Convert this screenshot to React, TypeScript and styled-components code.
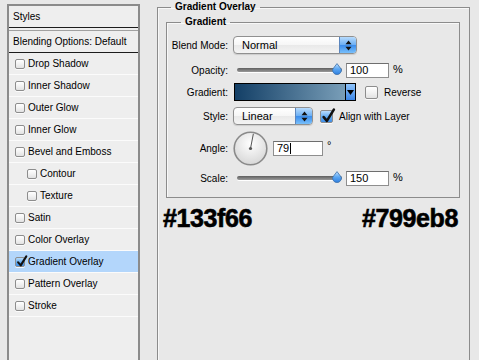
import { FC } from "react";
import styled, { createGlobalStyle } from "styled-components";

const GlobalStyle = createGlobalStyle`
  html, body {
    margin: 0;
    padding: 0;
    background: #e8e8e8;
  }
  body {
    font-family: "Liberation Sans", Arial, sans-serif;
    font-size: 10px;
    color: #000;
    overflow: hidden;
  }
`;

const Page = styled.div`
  display: flex;
  align-items: flex-start;
  width: 479px;
  height: 360px;
  overflow: hidden;
`;

/* ---------- left list ---------- */

const StylesPanel = styled.aside`
  flex: none;
  box-sizing: border-box;
  width: 133px;
  height: 400px;
  margin: 4px 0 0 7px;
  border: 2px solid #8b8b8b;
  background: #eeeeee;
`;

const PanelHeader = styled.div`
  height: 21px;
  display: flex;
  align-items: center;
  padding-left: 4px;
  border-bottom: 1px solid #1c1c1c;
  margin-bottom: 2px;
`;

const BlendingRow = styled.div`
  height: 21px;
  display: flex;
  align-items: center;
  padding-left: 4px;
  border-top: 1px solid #a0a0a0;
  border-bottom: 1px solid #1c1c1c;
`;

const EffectRow = styled.div<{ $indent?: boolean; $active?: boolean }>`
  height: 21px;
  display: flex;
  align-items: center;
  gap: 3px;
  padding-left: ${({ $indent }) => ($indent ? "18px" : "6px")};
  border-bottom: 1px solid #fbfbfb;
  background: ${({ $active }) => ($active ? "#b3d6fb" : "transparent")};
`;

const Box = styled.span<{ $size: number; $checked?: boolean }>`
  position: relative;
  flex: none;
  box-sizing: border-box;
  width: ${({ $size }) => $size}px;
  height: ${({ $size }) => $size}px;
  border: 1px solid #8d8d8d;
  border-radius: 2px;
  background: ${({ $checked }) =>
    $checked
      ? "linear-gradient(#b9dcfd, #5ea9f1 55%, #3f8ee9)"
      : "linear-gradient(#ffffff, #f2f2f2 50%, #e2e2e2)"};
  box-shadow: 0 1px 0 rgba(255, 255, 255, 0.8);

  svg {
    position: absolute;
    left: 0;
    top: -3px;
  }
`;

const Check: FC<{ size: number }> = ({ size }) => (
  <svg width={size + 2} height={size + 3} viewBox="0 0 14 15">
    <path
      d="M2.5 8.5 L5.5 12 L12 1.5"
      fill="none"
      stroke="#111"
      strokeWidth="2.4"
      strokeLinecap="round"
      strokeLinejoin="round"
    />
  </svg>
);

const CheckBox: FC<{ size: number; checked?: boolean }> = ({ size, checked }) => (
  <Box $size={size} $checked={checked}>
    {checked && <Check size={size} />}
  </Box>
);

/* ---------- right settings ---------- */

const Group = styled.fieldset`
  flex: none;
  box-sizing: border-box;
  width: 313px;
  height: 400px;
  min-width: 0;
  margin: 1px 0 0 17px;
  padding: 3px 9px 0 8px;
  border: 1px solid #8c8c8c;
  box-shadow: inset 1px 1px 0 #f8f8f8;
`;

const GroupTitle = styled.legend<{ $offset: number }>`
  margin-left: ${({ $offset }) => $offset}px;
  padding: 0 4px;
  line-height: 12px;
  font-weight: 700;
`;

const SubGroup = styled.fieldset`
  box-sizing: border-box;
  height: 182px;
  min-width: 0;
  margin: 0;
  padding: 4px 0 0;
  border: 1px solid #8c8c8c;
  box-shadow: inset 1px 1px 0 #f8f8f8;
`;

const FieldRow = styled.div<{ $h: number }>`
  display: grid;
  grid-template-columns: 61px auto;
  column-gap: 5px;
  align-items: center;
  height: ${({ $h }) => $h}px;
`;

const FieldLabel = styled.span`
  text-align: right;
  font-size: 10px;
`;

const Controls = styled.div`
  display: flex;
  align-items: center;
`;

const Select = styled.div<{ $w: number }>`
  box-sizing: border-box;
  display: flex;
  align-items: stretch;
  width: ${({ $w }) => $w}px;
  height: 18px;
  border: 1px solid #909090;
  border-radius: 4px;
  overflow: hidden;
  background: linear-gradient(#ffffff, #f6f6f6 50%, #e9e9e9 51%, #f4f4f4);
  box-shadow: 0 1px 1px rgba(0, 0, 0, 0.12);
`;

const SelectText = styled.span`
  flex: 1;
  display: flex;
  align-items: center;
  padding-left: 8px;
  font-size: 11px;
`;

const SelectButton = styled.span`
  flex: none;
  width: 16px;
  display: flex;
  align-items: center;
  justify-content: center;
  border-left: 1px solid #5c86bd;
  background: linear-gradient(#b7dbfd, #6aaef3 50%, #3a8cec 51%, #79c0fb);
`;

const UpDown: FC = () => (
  <svg width="7" height="11" viewBox="0 0 7 11">
    <path d="M3.5 0.5 L6.5 4.2 H0.5 Z M3.5 10.5 L6.5 6.8 H0.5 Z" fill="#111" />
  </svg>
);

const DropDown: FC<{ width: number; value: string }> = ({ width, value }) => (
  <Select $w={width}>
    <SelectText>{value}</SelectText>
    <SelectButton>
      <UpDown />
    </SelectButton>
  </Select>
);

const Slider = styled.div`
  position: relative;
  width: 105px;
  height: 12px;
  margin-left: 4px;
  display: flex;
  align-items: center;
`;

const Track = styled.div`
  width: 100%;
  height: 4px;
  border-radius: 2px;
  background: linear-gradient(#5f5f5f, #9a9a9a);
  box-shadow: 0 1px 0 #ffffff;
`;

const Thumb = styled.svg`
  position: absolute;
  right: 0;
  top: -1px;
`;

const SliderControl: FC = () => (
  <Slider>
    <Track />
    <Thumb width="10" height="12" viewBox="0 0 10 12">
      <defs>
        <linearGradient id="thumbFill" x1="0" y1="0" x2="0" y2="1">
          <stop offset="0" stopColor="#bfe0ff" />
          <stop offset="0.5" stopColor="#5aa6f2" />
          <stop offset="1" stopColor="#2f7fe0" />
        </linearGradient>
      </defs>
      <path
        d="M5 0.6 L9.3 6.2 A4.4 4.4 0 1 1 0.7 6.2 Z"
        fill="url(#thumbFill)"
        stroke="#3b6ea8"
        strokeWidth="0.8"
      />
    </Thumb>
  </Slider>
);

const ValueBox = styled.div<{ $w: number }>`
  box-sizing: border-box;
  width: ${({ $w }) => $w}px;
  height: 15px;
  margin-left: ${({ $w }) => ($w > 45 ? 5 : 4)}px;
  padding-left: 3px;
  display: flex;
  align-items: center;
  border: 1px solid #8e8e8e;
  border-top-color: #6e6e6e;
  background: #ffffff;
  font-size: 11px;
`;

const Caret = styled.span`
  width: 1px;
  height: 11px;
  margin-left: 1px;
  background: #000;
`;

const Unit = styled.span<{ $raise?: boolean }>`
  margin-left: 4px;
  font-size: 11px;
  margin-top: ${({ $raise }) => ($raise ? "-7px" : "-3px")};
`;

const GradientBar = styled.div`
  box-sizing: border-box;
  display: flex;
  width: 122px;
  height: 18px;
  margin-left: 1px;
  border: 1px solid #000;
`;

const GradientFill = styled.div`
  flex: 1;
  background: linear-gradient(90deg, #133f66, #799eb8);
`;

const GradientArrow = styled.div`
  flex: none;
  width: 9px;
  display: flex;
  align-items: center;
  justify-content: center;
  border-left: 1px solid #000;
  background: linear-gradient(#8fc4fb, #3c86e6);
`;

const OptionLabel = styled.span`
  margin-left: 6px;
  font-size: 10px;
`;

const Spacer = styled.span<{ $w: number }>`
  width: ${({ $w }) => $w}px;
  flex: none;
`;

const Dial = styled.svg`
  flex: none;
  display: block;
`;

const HexRow = styled.div`
  display: flex;
  justify-content: space-between;
  margin: 6px 2px 0 -3px;
`;

const HexCode = styled.span`
  font-family: "Liberation Sans", Arial, sans-serif;
  font-weight: 700;
  font-size: 25px;
  line-height: 28px;
  letter-spacing: -0.4px;
  -webkit-text-stroke: 0.6px #000;
`;

const effects: { name: string; indent?: boolean; active?: boolean }[] = [
  { name: "Drop Shadow" },
  { name: "Inner Shadow" },
  { name: "Outer Glow" },
  { name: "Inner Glow" },
  { name: "Bevel and Emboss" },
  { name: "Contour", indent: true },
  { name: "Texture", indent: true },
  { name: "Satin" },
  { name: "Color Overlay" },
  { name: "Gradient Overlay", active: true },
  { name: "Pattern Overlay" },
  { name: "Stroke" },
];

const angle = 79;
const rad = (angle * Math.PI) / 180;
const needleX = 17.5 + Math.cos(rad) * 15;
const needleY = 17.5 - Math.sin(rad) * 15;

export default function App() {
  return (
    <>
      <GlobalStyle />
      <Page>
        <StylesPanel>
          <PanelHeader>Styles</PanelHeader>
          <BlendingRow>Blending Options: Default</BlendingRow>
          {effects.map((fx) => (
            <EffectRow key={fx.name} $indent={fx.indent} $active={fx.active}>
              <CheckBox size={10} checked={fx.active} />
              {fx.name}
            </EffectRow>
          ))}
        </StylesPanel>

        <Group>
          <GroupTitle $offset={5}>Gradient Overlay</GroupTitle>
          <SubGroup>
            <GroupTitle $offset={14}>Gradient</GroupTitle>

            <FieldRow $h={26}>
              <FieldLabel>Blend Mode:</FieldLabel>
              <Controls>
                <DropDown width={124} value="Normal" />
              </Controls>
            </FieldRow>

            <FieldRow $h={24}>
              <FieldLabel>Opacity:</FieldLabel>
              <Controls>
                <SliderControl />
                <ValueBox $w={43}>100</ValueBox>
                <Unit>%</Unit>
              </Controls>
            </FieldRow>

            <FieldRow $h={20}>
              <FieldLabel>Gradient:</FieldLabel>
              <Controls>
                <GradientBar>
                  <GradientFill />
                  <GradientArrow>
                    <svg width="7" height="5" viewBox="0 0 7 5">
                      <path d="M0 0 H7 L3.5 5 Z" fill="#000" />
                    </svg>
                  </GradientArrow>
                </GradientBar>
                <Spacer $w={9} />
                <CheckBox size={13} />
                <OptionLabel>Reverse</OptionLabel>
              </Controls>
            </FieldRow>

            <FieldRow $h={28}>
              <FieldLabel>Style:</FieldLabel>
              <Controls>
                <DropDown width={80} value="Linear" />
                <Spacer $w={7} />
                <CheckBox size={13} checked />
                <OptionLabel>Align with Layer</OptionLabel>
              </Controls>
            </FieldRow>

            <FieldRow $h={36}>
              <FieldLabel>Angle:</FieldLabel>
              <Controls>
                <Dial width="35" height="35" viewBox="0 0 35 35">
                  <defs>
                    <radialGradient id="dialFill" cx="0.5" cy="0.35" r="0.7">
                      <stop offset="0" stopColor="#ffffff" />
                      <stop offset="1" stopColor="#d4d4d4" />
                    </radialGradient>
                  </defs>
                  <circle
                    cx="17.5"
                    cy="17.5"
                    r="16.3"
                    fill="url(#dialFill)"
                    stroke="#8a8a8a"
                    strokeWidth="1.6"
                  />
                  <line
                    x1="17.5"
                    y1="17.5"
                    x2={needleX}
                    y2={needleY}
                    stroke="#555"
                    strokeWidth="1"
                  />
                  <circle cx="17.5" cy="17.5" r="1.6" fill="#555" />
                </Dial>
                <ValueBox $w={50}>
                  {angle}
                  <Caret />
                </ValueBox>
                <Unit $raise>°</Unit>
              </Controls>
            </FieldRow>

            <FieldRow $h={24}>
              <FieldLabel>Scale:</FieldLabel>
              <Controls>
                <SliderControl />
                <ValueBox $w={43}>150</ValueBox>
                <Unit>%</Unit>
              </Controls>
            </FieldRow>
          </SubGroup>

          <HexRow>
            <HexCode>#133f66</HexCode>
            <HexCode>#799eb8</HexCode>
          </HexRow>
        </Group>
      </Page>
    </>
  );
}
